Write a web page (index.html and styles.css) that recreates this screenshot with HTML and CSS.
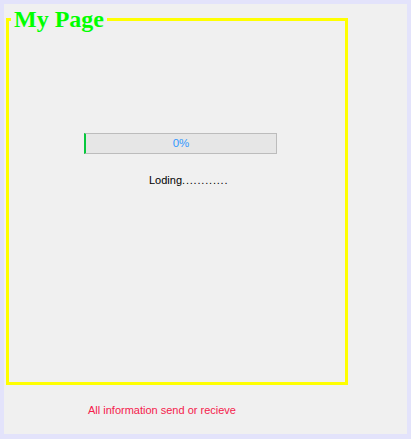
FILE: index.html
```html
<!DOCTYPE html>
<html>
<head>
<meta charset="utf-8">
<link rel="stylesheet" href="styles.css">
</head>
<body>
<div class="window">
  <fieldset class="frame">
    <legend class="title">My Page</legend>
    <div class="progress"><span class="progress-label">0%</span></div>
    <div class="loading">Loding<span class="dots">............</span></div>
  </fieldset>
  <div class="footer">All information send or recieve</div>
</div>
</body>
</html>
```
FILE: styles.css
```css
html, body {
  margin: 0;
  padding: 0;
  background: #e3e3fb;
}
.window {
  box-sizing: border-box;
  margin: 4px 4px 0 4px;
  width: 403px;
  height: 430px;
  background: #f0f0f0;
  padding: 2px 0 0 2px;
  font-family: "Liberation Sans", Arial, sans-serif;
  font-size: 11px;
}
.frame {
  box-sizing: border-box;
  margin: 0;
  width: 342px;
  height: 379px;
  border: 3px solid #ffff00;
  padding: 0 0 0 2px;
  min-width: 0;
}
.title {
  padding: 0 3px;
  margin: 0;
  font-family: "Liberation Serif", "Times New Roman", serif;
  font-weight: bold;
  font-size: 24px;
  line-height: 27px;
  color: #00ff00;
}
.progress {
  box-sizing: border-box;
  margin: 100px 0 0 73px;
  width: 193px;
  height: 21px;
  border: 1px solid #bcbcbc;
  border-left: 2px solid #06c83c;
  background: #e6e6e6;
  display: flex;
  align-items: center;
  justify-content: center;
}
.progress-label {
  color: #3399ff;
  font-size: 11.5px;
  line-height: 13px;
}
.loading {
  margin: 20px 0 0 138px;
  color: #000;
  line-height: 13px;
}
.dots {
  letter-spacing: 0.8px;
}
.footer {
  margin: 19px 0 0 82px;
  color: #f5204c;
  line-height: 13px;
}
```
